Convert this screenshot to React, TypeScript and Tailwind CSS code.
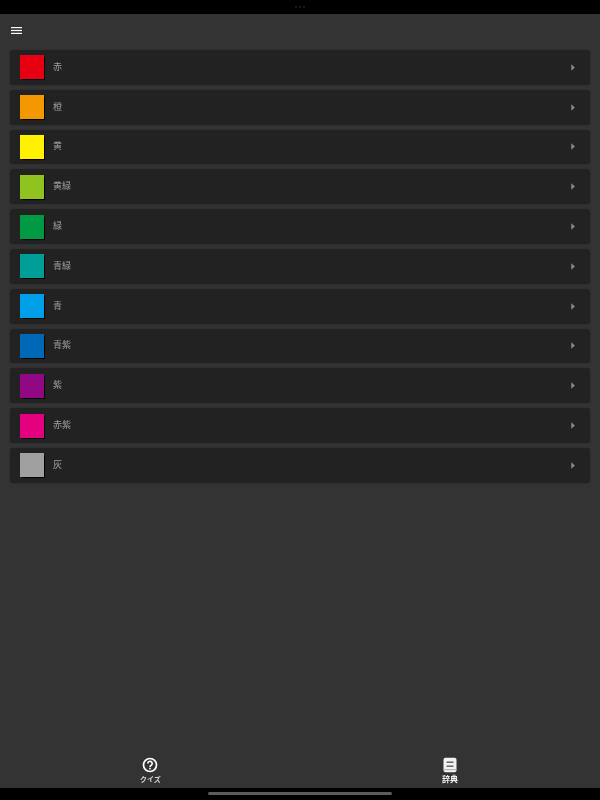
const rows: [string, string][] = [
  ["赤", "#e60012"],
  ["橙", "#f39800"],
  ["黄", "#fff100"],
  ["黄緑", "#8fc31f"],
  ["緑", "#009944"],
  ["青緑", "#009e96"],
  ["青", "#00a0e9"],
  ["青紫", "#0068b7"],
  ["紫", "#920783"],
  ["赤紫", "#e4007f"],
  ["灰", "#a0a0a0"],
];

export default function App() {
  return (
    <div className="flex h-[800px] w-[600px] flex-col overflow-hidden bg-[#333333] font-['Liberation_Sans','Noto_Sans_CJK_JP',sans-serif]">
      <div className="flex h-[14px] items-center justify-center gap-[2px] bg-black">
        <span className="size-[2px] rounded-full bg-[#222222]" />
        <span className="size-[2px] rounded-full bg-[#222222]" />
        <span className="size-[2px] rounded-full bg-[#222222]" />
      </div>
      <div className="flex h-[36px] shrink-0 items-start pl-[11px] pt-[12px]">
        <svg width="11" height="9" viewBox="0 0 11 9" className="block">
          <rect x="0" y="1" width="11" height="1.2" fill="#fff" />
          <rect x="0" y="3.9" width="11" height="1.2" fill="#fff" />
          <rect x="0" y="6.8" width="11" height="1.2" fill="#fff" />
        </svg>
      </div>
      <div className="flex flex-1 flex-col gap-[5px] px-[10px]">
        {rows.map(([name, color]) => (
          <div
            key={name}
            className="flex h-[34.8px] shrink-0 items-center rounded-[3px] bg-[#222222] pl-[10px] pr-[15px] shadow-[0_0_2px_rgba(0,0,0,0.25)]"
          >
            <div className="size-[24px] shrink-0 shadow-[0.5px_0.5px_1px_rgba(0,0,0,0.9)]" style={{ backgroundColor: color }} />
            <span className="ml-[9px] flex-1 text-[9px] leading-none text-[#a0a0a0] will-change-transform">{name}</span>
            <svg width="4" height="7" viewBox="0 0 4 7" className="block">
              <path d="M0.3 0.2 L3.8 3.5 L0.3 6.8 Z" fill="#8c8c8c" />
            </svg>
          </div>
        ))}
      </div>
      <div className="flex h-[38px] shrink-0">
        <div className="flex flex-1 flex-col items-center pt-[7px]">
          <svg width="16" height="16" viewBox="0 0 16 16" className="block">
            <circle cx="8" cy="8" r="6.5" fill="none" stroke="#fff" strokeWidth="1.7" />
            <path d="M5.8 6.5 A2.2 2.2 0 1 1 9.3 8.2 C8.4 8.7 8 9 8 10" fill="none" stroke="#fff" strokeWidth="1.6" />
            <rect x="7.2" y="10.8" width="1.6" height="1.6" fill="#fff" />
          </svg>
          <span className="mt-[2px] text-[7px] font-bold leading-[9px] text-[#d8d8d8] will-change-transform">クイズ</span>
        </div>
        <div className="flex flex-1 flex-col items-center pt-[7px]">
          <svg width="16" height="16" viewBox="0 0 16 16" className="block">
            <path d="M3.5 0.7 H12.5 A2 2 0 0 1 14.5 2.7 V13.3 A2 2 0 0 1 12.5 15.3 H3.5 A2 2 0 0 1 1.5 13.3 V2.7 A2 2 0 0 1 3.5 0.7 Z" fill="#f2f2f2" />
            <rect x="4.5" y="4.6" width="7" height="1.1" fill="#333" />
            <rect x="4.5" y="8.6" width="7" height="1.1" fill="#333" />
            <rect x="1.5" y="12.2" width="13" height="1" fill="#aaa" />
          </svg>
          <span className="mt-[2px] text-[8px] font-bold leading-[9px] text-[#eeeeee] will-change-transform">辞典</span>
        </div>
      </div>
      <div className="flex h-[12px] shrink-0 justify-center bg-black pt-[4px]">
        <div className="h-[3px] w-[184px] rounded-full bg-[#5c5c5c]" />
      </div>
    </div>
  );
}
